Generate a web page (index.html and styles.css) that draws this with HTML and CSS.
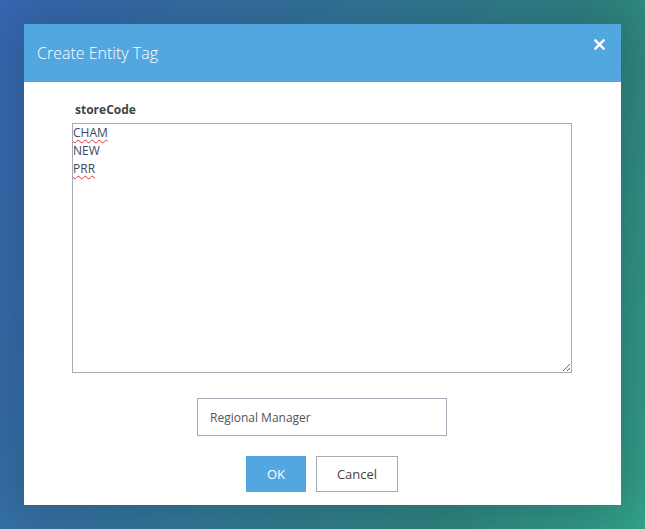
FILE: index.html
```html
<!DOCTYPE html>
<html>
<head>
<meta charset="utf-8">
<link rel="stylesheet" href="styles.css">
</head>
<body>
<div class="dialog">
  <div class="header">
    <span class="title">Create Entity Tag</span>
    <svg class="close" width="11" height="11" viewBox="0 0 11 11"><path d="M1.5 1.5 L9.5 9.5 M9.5 1.5 L1.5 9.5" stroke="#fff" stroke-width="2.4" stroke-linecap="square"/></svg>
  </div>
  <div class="body">
    <div class="field">
      <div class="label">storeCode</div>
      <div class="area"><span class="sp">CHAM</span><br>NEW<br><span class="sp">PRR</span></div>
    </div>
    <div class="input">Regional Manager</div>
    <div class="buttons">
      <button class="btn ok">OK</button>
      <button class="btn cancel">Cancel</button>
    </div>
  </div>
</div>
</body>
</html>
```
FILE: styles.css
```css
html, body { margin: 0; padding: 0; }
body {
  width: 645px;
  height: 529px;
  overflow: hidden;
  background: linear-gradient(110deg, #3a6bbb 0%, #357d9e 45%, #308c84 75%, #35ab8e 100%);
  font-family: "Open Sans", "Noto Sans", sans-serif;
  padding: 24px 0 0 24px;
  box-sizing: border-box;
}
.dialog {
  width: 597px;
  height: 481px;
  background: #fff;
  box-shadow: 0 0 60px 20px rgba(20, 40, 60, 0.3);
  display: flex;
  flex-direction: column;
}
.header {
  height: 58px;
  background: #53a7e0;
  display: flex;
  align-items: center;
  justify-content: space-between;
  padding: 0 16px 0 13px;
  box-sizing: border-box;
}
.title {
  color: #fff;
  font-size: 16px;
  font-weight: 300;
}
.close { margin-top: -17px; }
.body {
  display: flex;
  flex-direction: column;
  align-items: flex-start;
  padding: 20px 0 0 48px;
}
.field { width: 500px; }
.label {
  font-size: 12px;
  font-weight: 700;
  color: #444;
  margin-left: 3px;
  line-height: 16px;
  margin-bottom: 5px;
}
.area {
  box-sizing: border-box;
  width: 500px;
  height: 250px;
  border: 1px solid #a3abb8;
  padding: 0;
  font-size: 12px;
  line-height: 18px;
  color: #3d4a5c;
  resize: both;
  overflow: auto;
}
.sp {
  text-decoration: underline wavy #e03030;
  text-decoration-thickness: 1px;
  text-underline-offset: 2px;
}
.input {
  box-sizing: border-box;
  width: 250px;
  height: 38px;
  margin: 25px 0 0 125px;
  border: 1px solid #a3abb8;
  padding-left: 12px;
  font-size: 12px;
  color: #555;
  display: flex;
  align-items: center;
}
.buttons {
  display: flex;
  gap: 10px;
  margin: 20px 0 0 174px;
}
.btn {
  box-sizing: border-box;
  height: 36px;
  font-family: "Open Sans", "Noto Sans", sans-serif;
  font-size: 13px;
  padding: 0;
  margin: 0;
}
.ok {
  width: 60px;
  background: #53a7e0;
  color: #fff;
  border: none;
}
.cancel {
  width: 82px;
  background: #fff;
  color: #444;
  border: 1px solid #a3abb8;
}
```
